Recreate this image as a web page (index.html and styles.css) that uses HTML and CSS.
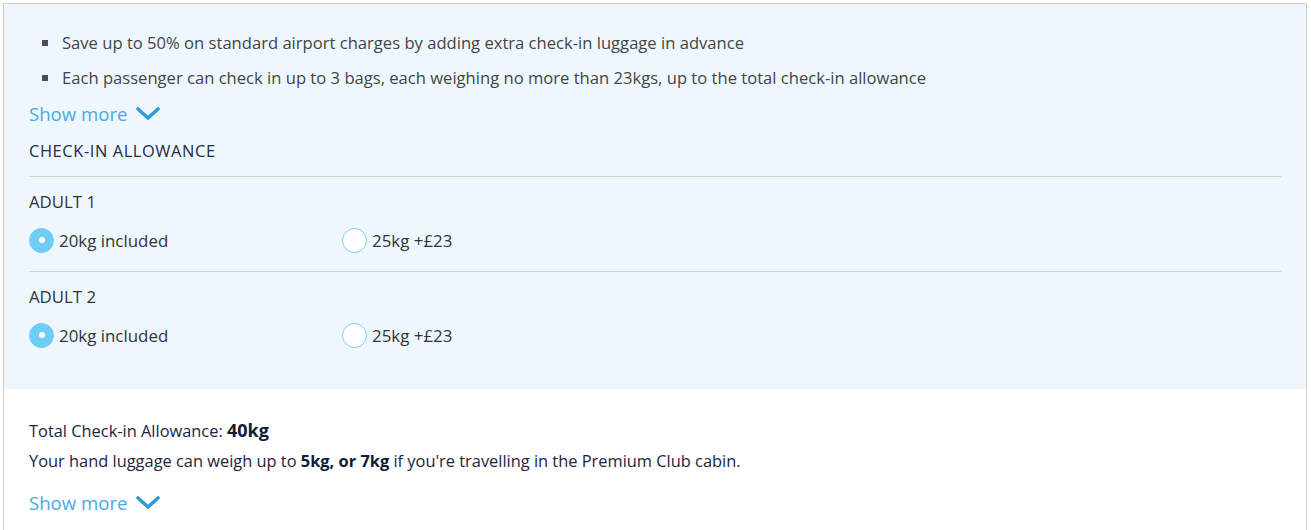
FILE: index.html
```html
<!DOCTYPE html>
<html lang="en">
<head>
<meta charset="utf-8">
<title>Check-in allowance</title>
<link rel="stylesheet" href="styles.css">
</head>
<body>
<div class="panel">
  <div class="upper">
    <ul class="bullets">
      <li>Save up to 50% on standard airport charges by adding extra check-in luggage in advance</li>
      <li>Each passenger can check in up to 3 bags, each weighing no more than 23kgs, up to the total check-in allowance</li>
    </ul>
    <a class="show-more" href="#">Show more
      <svg class="chev" width="24" height="14" viewBox="0 0 24 14"><path d="M2 2 L12 11 L22 2" fill="none" stroke="currentColor" stroke-width="3.6" stroke-linecap="round" stroke-linejoin="round"/></svg>
    </a>
    <div class="section-title">CHECK-IN ALLOWANCE</div>
    <div class="passenger">
      <div class="pax-name">ADULT 1</div>
      <div class="options">
        <label class="option"><span class="radio checked"></span>20kg included</label>
        <label class="option"><span class="radio"></span>25kg +£23</label>
      </div>
    </div>
    <div class="passenger">
      <div class="pax-name">ADULT 2</div>
      <div class="options">
        <label class="option"><span class="radio checked"></span>20kg included</label>
        <label class="option"><span class="radio"></span>25kg +£23</label>
      </div>
    </div>
  </div>
  <div class="lower">
    <p class="total">Total Check-in Allowance: <strong>40kg</strong></p>
    <p class="hand">Your hand luggage can weigh up to <strong>5kg, or 7kg</strong> if you're travelling in the Premium Club cabin.</p>
    <a class="show-more" href="#">Show more
      <svg class="chev" width="24" height="14" viewBox="0 0 24 14"><path d="M2 2 L12 11 L22 2" fill="none" stroke="currentColor" stroke-width="3.6" stroke-linecap="round" stroke-linejoin="round"/></svg>
    </a>
  </div>
</div>
</body>
</html>
```

FILE: styles.css
```css
html, body {
  margin: 0;
  padding: 0;
  background: #ffffff;
}

body {
  font-family: "Open Sans", "Noto Sans", "Liberation Sans", sans-serif;
  color: #3c3c3c;
}

.panel {
  margin: 3px 0 0 3px;
  width: 1302px;
  height: 600px;
  border: 1px solid #d5d1c7;
  border-bottom: none;
}

.upper {
  background: #eff7fe;
  padding: 21px 25px 23px 25px;
}

.bullets {
  list-style: none;
  margin: 0;
  padding: 0;
}

.bullets li {
  display: flex;
  align-items: center;
  height: 35px;
  font-size: 16.6px;
  color: #444444;
  padding-left: 13px;
}

.bullets li::before {
  content: "";
  width: 6px;
  height: 6px;
  background: #4d4d4d;
  margin-right: 14px;
  flex: none;
}

.show-more {
  display: flex;
  align-items: center;
  height: 36px;
  font-size: 18.6px;
  color: #4aa9e1;
  text-decoration: none;
  width: max-content;
}

.chev {
  margin-left: 9px;
  color: #2f9bd8;
  margin-top: 1px;
}

.section-title {
  height: 40px;
  line-height: 40px;
  font-size: 16.4px;
  letter-spacing: 0.6px;
  color: #262b3f;
  padding-bottom: 5px;
}

.passenger {
  border-top: 1px solid #d5d1c7;
  padding: 7px 0 11px;
}

.pax-name {
  height: 36px;
  line-height: 36px;
  font-size: 16.8px;
  color: #333333;
}

.options {
  display: grid;
  grid-template-columns: 313px auto;
  height: 40px;
  align-items: center;
}

.option {
  display: flex;
  align-items: center;
  font-size: 16.9px;
  color: #333333;
}

.radio {
  box-sizing: border-box;
  width: 25px;
  height: 25px;
  border-radius: 50%;
  background: #ffffff;
  border: 1px solid #7cd0f4;
  margin: 0 5px 0 0;
  display: flex;
  align-items: center;
  justify-content: center;
}

.radio.checked {
  background: #6dcdf5;
  border-color: #6dcdf5;
}

.radio.checked::after {
  content: "";
  width: 6px;
  height: 6px;
  border-radius: 50%;
  background: #ffffff;
}

.lower {
  padding: 26px 25px 0 25px;
}

.lower p {
  margin: 0;
  font-size: 16.4px;
  color: #1e2440;
}

.total {
  height: 30px;
  line-height: 30px;
}

.total strong {
  font-size: 18px;
  color: #0d1c3a;
}

.hand {
  height: 31px;
  line-height: 31px;
}

.hand strong {
  color: #0d1c3a;
}

.lower .show-more {
  margin-top: 8px;
}
```
